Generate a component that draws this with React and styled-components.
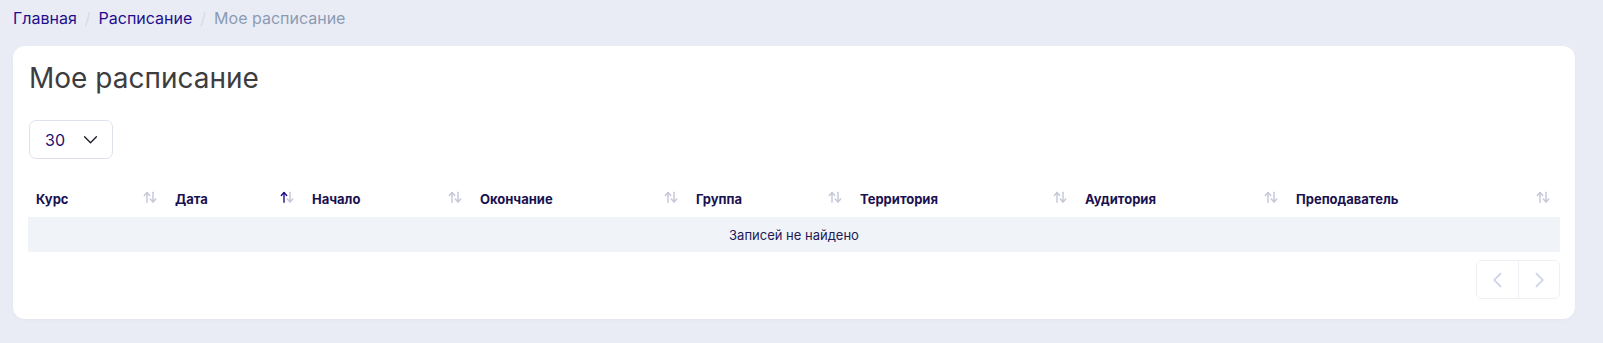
import React, { useState } from "react";
import styled, { createGlobalStyle } from "styled-components";

const GlobalStyle = createGlobalStyle`
  html, body {
    margin: 0;
    padding: 0;
    background: #eaecf5;
    font-family: Inter, "Noto Sans", sans-serif;
  }
  * { box-sizing: border-box; }
`;

const columns = [
  { title: "Курс", width: 139 },
  { title: "Дата", width: 137, active: true },
  { title: "Начало", width: 168 },
  { title: "Окончание", width: 216 },
  { title: "Группа", width: 164 },
  { title: "Территория", width: 225 },
  { title: "Аудитория", width: 211 },
  { title: "Преподаватель", width: 272 },
];

const SortIcon = ({ active }) => (
  <svg width="14" height="12" viewBox="0 0 14 12" fill="none" strokeWidth="1.4" strokeLinecap="round" strokeLinejoin="round">
    <g stroke={active ? "#1e0a8c" : "#c4c6d8"}>
      <path d="M4 11V1.5" />
      <path d="M1.3 4.2L4 1.3l2.7 2.9" />
    </g>
    <g stroke="#c4c6d8">
      <path d="M10 1v9.5" />
      <path d="M7.3 7.8L10 10.7l2.7-2.9" />
    </g>
  </svg>
);

const Chevron = ({ dir, color = "#1f1f2e", size = 14 }) => (
  <svg width={size} height={size} viewBox="0 0 14 14" fill="none" stroke={color} strokeWidth="1.3" strokeLinecap="round" strokeLinejoin="round">
    {dir === "down" && <path d="M1.5 4.5L7 10l5.5-5.5" />}
    {dir === "left" && <path d="M9 2L4 7l5 5" />}
    {dir === "right" && <path d="M5 2l5 5-5 5" />}
  </svg>
);

const App = () => {
  const [perPage] = useState(30);

  return (
    <Page>
      <GlobalStyle />
      <Breadcrumbs>
        <a href="#">Главная</a>
        <Sep>/</Sep>
        <a href="#">Расписание</a>
        <Sep>/</Sep>
        <span className="current">Мое расписание</span>
      </Breadcrumbs>

      <Card>
        <Title>Мое расписание</Title>

        <Select>
          <span>{perPage}</span>
          <Chevron dir="down" size={15} />
        </Select>

        <Table>
          <colgroup>
            {columns.map((c) => (
              <col key={c.title} style={{ width: c.width }} />
            ))}
          </colgroup>
          <thead>
            <tr>
              {columns.map((c) => (
                <Th key={c.title}>
                  {c.title}
                  <SortSlot>
                    <SortIcon active={c.active} />
                  </SortSlot>
                </Th>
              ))}
            </tr>
          </thead>
          <tbody>
            <tr>
              <EmptyCell colSpan={columns.length}>Записей не найдено</EmptyCell>
            </tr>
          </tbody>
        </Table>

        <Footer>
          <Pager>
            <PageButton disabled>
              <Chevron dir="left" color="#c9d1e6" size={18} />
            </PageButton>
            <PageButton disabled>
              <Chevron dir="right" color="#c9d1e6" size={18} />
            </PageButton>
          </Pager>
        </Footer>
      </Card>
    </Page>
  );
};

const Page = styled.div`
  width: 1603px;
  height: 343px;
  padding: 7px 28px 0 13px;
  background: #eaecf5;
`;

const Breadcrumbs = styled.nav`
  display: flex;
  align-items: center;
  height: 22px;
  font-size: 16px;
  padding-left: 0;
  a {
    color: #1e0f8e;
    text-decoration: none;
  }
  .current {
    color: #8b9bb4;
  }
`;

const Sep = styled.span`
  color: #d6dae6;
  margin: 0 8px;
`;

const Card = styled.section`
  margin-top: 17px;
  width: 1562px;
  background: #ffffff;
  border-radius: 12px;
  padding: 14px 15px 20px 15px;
  box-shadow: 0 1px 3px rgba(40, 50, 100, 0.04);
`;

const Title = styled.h1`
  margin: 0 0 0 1px;
  font-size: 28px;
  font-weight: 400;
  line-height: 36px;
  color: #3d3d3f;
`;

const Select = styled.div`
  margin: 24px 0 0 1px;
  width: 84px;
  height: 39px;
  border: 1px solid #dde2ec;
  border-radius: 7px;
  display: flex;
  align-items: center;
  justify-content: space-between;
  padding: 0 14px 0 15px;
  font-size: 16px;
  color: #1e0f6e;
`;

const Table = styled.table`
  margin-top: 21px;
  width: 1532px;
  border-collapse: collapse;
  table-layout: fixed;
`;

const Th = styled.th`
  position: relative;
  height: 37px;
  padding: 0 24px 0 8px;
  text-align: left;
  font-size: 13px;
  font-weight: 700;
  color: #1a1150;
  white-space: nowrap;
`;

const SortSlot = styled.span`
  position: absolute;
  right: 10px;
  top: 50%;
  transform: translateY(-65%);
  display: flex;
`;

const EmptyCell = styled.td`
  height: 35px;
  background: #f0f3f8;
  text-align: center;
  font-size: 13px;
  color: #231a55;
`;

const Footer = styled.div`
  display: flex;
  justify-content: flex-end;
  margin-top: 8px;
`;

const Pager = styled.div`
  display: flex;
  border: 1px solid #eef0f6;
  border-radius: 6px;
  overflow: hidden;
`;

const PageButton = styled.button`
  width: 41px;
  height: 37px;
  border: none;
  background: #ffffff;
  display: flex;
  align-items: center;
  justify-content: center;
  padding: 0;
  & + & {
    border-left: 1px solid #eef0f6;
  }
`;

export default App;
